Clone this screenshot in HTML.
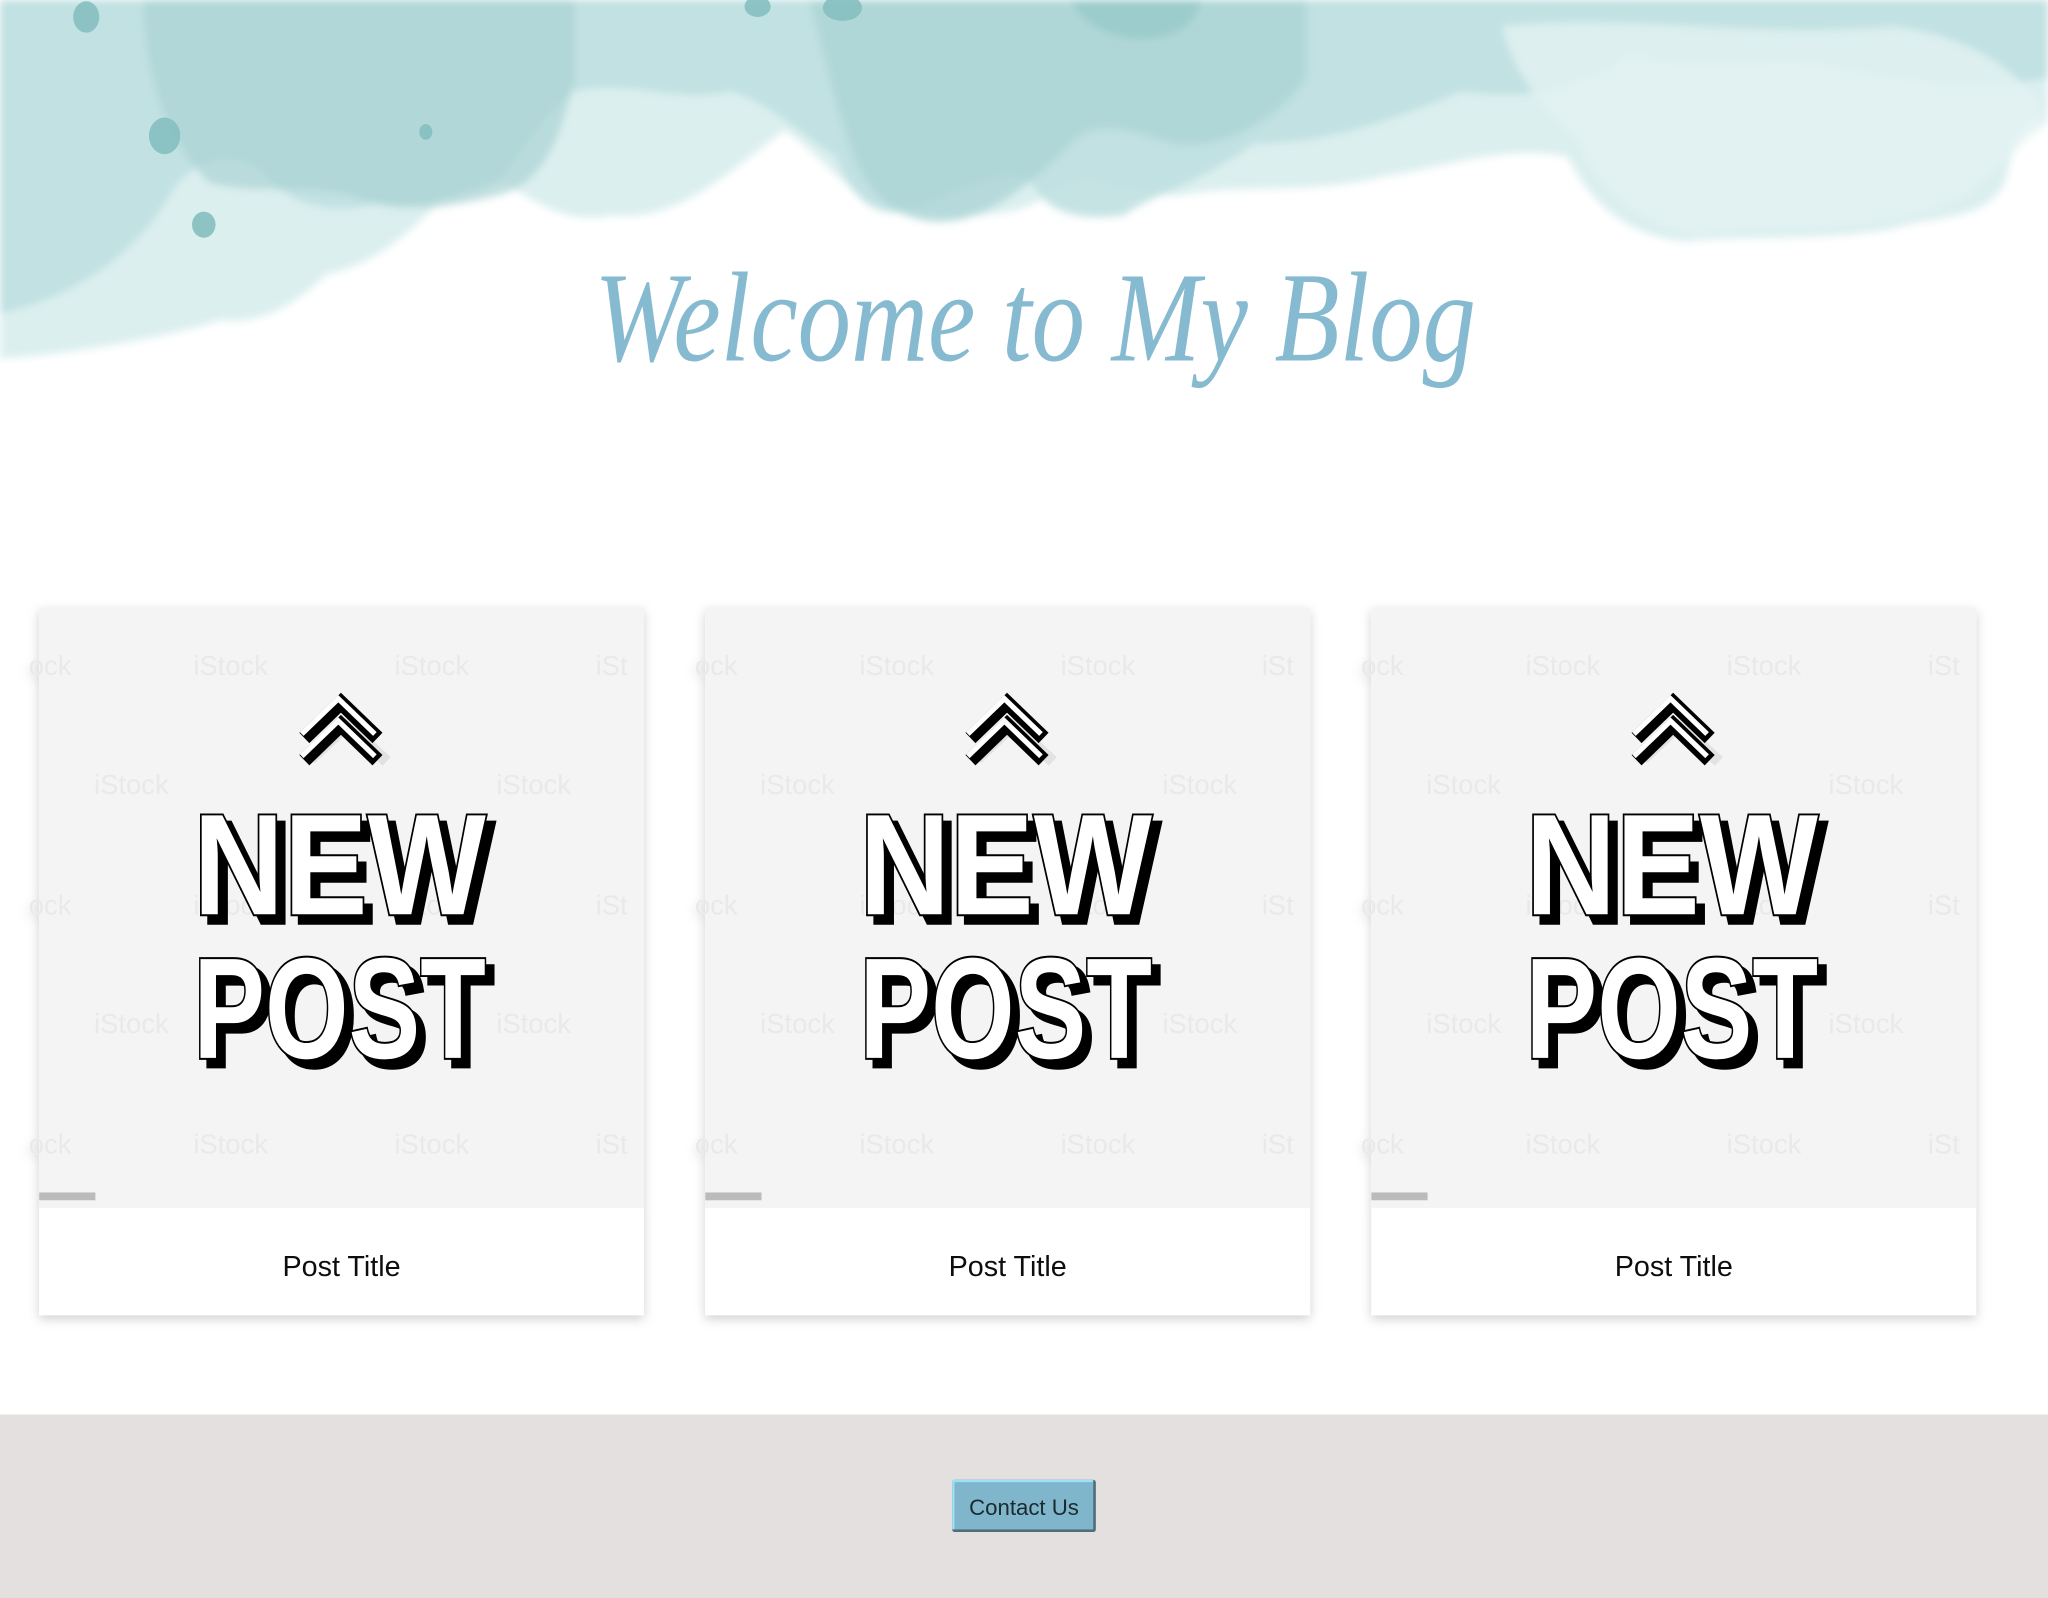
<!DOCTYPE html>
<html><head><meta charset="utf-8"><style>
html,body{margin:0;padding:0;background:#fff;width:2048px;height:1598px;overflow:hidden}
svg{display:block}
</style></head><body>
<svg width="2048" height="1598" viewBox="0 0 1568 1223.5" xmlns="http://www.w3.org/2000/svg">
<defs>
<filter id="blur" x="-10%" y="-10%" width="120%" height="120%"><feGaussianBlur stdDeviation="3"/></filter>
<filter id="sh" x="-10%" y="-10%" width="130%" height="130%"><feDropShadow dx="0" dy="3" stdDeviation="4" flood-color="#000" flood-opacity="0.18"/></filter>
<g id="post">
 <rect x="0" y="0" width="463" height="542" fill="#fff"/>
 <rect x="0" y="0" width="463" height="460" fill="#f4f4f4"/>
 <g font-family="Liberation Sans, sans-serif" fill="#e9e9e9">
  <text x="118" y="52" font-size="21">iStock</text><text x="272" y="52" font-size="21">iStock</text>
  <text x="42" y="143" font-size="21">iStock</text><text x="350" y="143" font-size="21">iStock</text>
  <text x="118" y="235" font-size="21">iStock</text><text x="272" y="235" font-size="21">iStock</text>
  <text x="42" y="326" font-size="21">iStock</text><text x="350" y="326" font-size="21">iStock</text>
  <text x="118" y="418" font-size="21">iStock</text><text x="272" y="418" font-size="21">iStock</text>
  <text x="-8" y="52" font-size="21">ock</text><text x="426" y="52" font-size="21">iSt</text>
  <text x="-8" y="235" font-size="21">ock</text><text x="426" y="235" font-size="21">iSt</text>
  <text x="-8" y="418" font-size="21">ock</text><text x="426" y="418" font-size="21">iSt</text>
 </g>
 <rect x="0" y="448" width="43" height="6" fill="#bbb"/>
 <!-- chevrons -->
 <g fill="none" stroke-linejoin="miter">
  <polyline points="208,116 236,90 266,118" stroke="#e2e2e2" stroke-width="9"/>
  <polyline points="203,100 231,73 259,100" stroke="#000" stroke-width="11"/>
  <polyline points="201,97 229,70 257,97" stroke="#fff" stroke-width="4"/>
  <polyline points="203,117 231,90 259,117" stroke="#000" stroke-width="11"/>
  <polyline points="201,114 229,87 257,114" stroke="#fff" stroke-width="4"/>
 </g>
 <g font-family="Liberation Sans, sans-serif" font-weight="bold" font-size="110">
  <text x="124" y="241" textLength="224" lengthAdjust="spacingAndGlyphs" fill="#000" stroke="#000" stroke-width="4">NEW</text>
  <text x="118" y="235" textLength="224" lengthAdjust="spacingAndGlyphs" fill="#fff" stroke="#000" stroke-width="3" paint-order="stroke">NEW</text>
  <text x="124" y="351" textLength="224" lengthAdjust="spacingAndGlyphs" fill="#000" stroke="#000" stroke-width="4">POST</text>
  <text x="118" y="345" textLength="224" lengthAdjust="spacingAndGlyphs" fill="#fff" stroke="#000" stroke-width="3" paint-order="stroke">POST</text>
 </g>
 <text x="231.5" y="512" text-anchor="middle" font-family="Liberation Sans, sans-serif" font-size="22" fill="#111">Post Title</text>
</g>
</defs>

<!-- watercolor -->
<g filter="url(#blur)">
 <path d="M0,0 H1568 V95 C1550,90 1545,100 1535,140 C1520,170 1480,165 1450,175 C1400,185 1330,180 1290,185 C1240,180 1215,150 1200,120 C1150,110 1100,130 1060,135 C1000,150 950,140 900,150 C850,145 830,125 800,150 C780,170 700,170 670,155 C640,140 620,110 600,100 C560,130 520,170 470,165 C420,175 400,140 360,130 C330,160 300,200 250,210 C230,230 200,250 170,245 C120,260 60,270 0,275 Z" fill="#dcefef"/>
 <path d="M0,0 H1568 V60 C1500,70 1450,60 1400,50 C1350,40 1300,60 1250,40 C1220,60 1180,80 1120,70 C1070,90 1020,110 960,110 C920,140 880,150 860,165 C820,170 800,160 790,140 C770,125 730,150 700,160 C670,170 650,150 640,120 C610,100 590,80 560,70 C520,80 480,60 440,70 C410,90 400,120 380,140 C360,150 320,160 290,155 C260,165 220,160 200,130 C170,110 140,130 130,150 C100,200 50,230 0,240 Z" fill="#bcdedf" opacity="0.85"/>
 <path d="M110,0 H440 V60 C430,100 420,140 380,150 C340,160 300,165 270,150 C230,140 200,150 160,140 C130,110 110,60 110,0 Z" fill="#a9d3d4" opacity="0.7"/>
 <path d="M620,0 H1000 V60 C980,90 940,115 900,110 C860,100 840,90 820,110 C800,130 760,170 720,170 C680,170 660,140 650,110 C640,80 630,40 620,0 Z" fill="#a9d3d4" opacity="0.75"/>
 <path d="M1150,20 C1250,10 1350,30 1450,20 C1520,30 1550,60 1568,90 V95 C1540,110 1520,150 1480,160 C1430,180 1360,170 1300,180 C1250,170 1220,140 1210,110 C1180,80 1160,60 1150,20 Z" fill="#e3f2f2" opacity="0.8"/>
 <path d="M820,0 H920 C915,20 900,30 870,30 C845,28 825,15 820,0 Z" fill="#8fc4c4" opacity="0.6"/>
</g>
<g fill="#86bfc0" opacity="0.9">
 <ellipse cx="66" cy="13" rx="10" ry="12"/>
 <ellipse cx="126" cy="104" rx="12" ry="14"/>
 <ellipse cx="156" cy="172" rx="9" ry="10"/>
 <ellipse cx="326" cy="101" rx="5" ry="6"/>
 <ellipse cx="645" cy="6" rx="15" ry="10"/>
 <ellipse cx="580" cy="5" rx="10" ry="8"/>
</g>

<!-- title -->
<text x="455" y="276" textLength="675" lengthAdjust="spacingAndGlyphs" font-family="Liberation Serif, serif" font-style="italic" font-size="98" fill="#86bad0">Welcome to My Blog</text>

<!-- cards -->
<use href="#post" x="30" y="465" filter="url(#sh)"/>
<use href="#post" x="540" y="465" filter="url(#sh)"/>
<use href="#post" x="1050" y="465" filter="url(#sh)"/>

<!-- footer -->
<rect x="0" y="1083" width="1568" height="141" fill="#e3e0df"/>
<rect x="729" y="1133" width="110" height="40" fill="#4d6e7a" rx="2"/>
<path d="M729,1133 H837 V1135 H731 V1171 H729 Z" fill="#9ee0f8"/>
<rect x="731" y="1135" width="106" height="36" fill="#7fb6cb"/>
<text x="784" y="1160" text-anchor="middle" font-family="Liberation Sans, sans-serif" font-size="17" fill="#1c2a30">Contact Us</text>
</svg>
</body></html>
